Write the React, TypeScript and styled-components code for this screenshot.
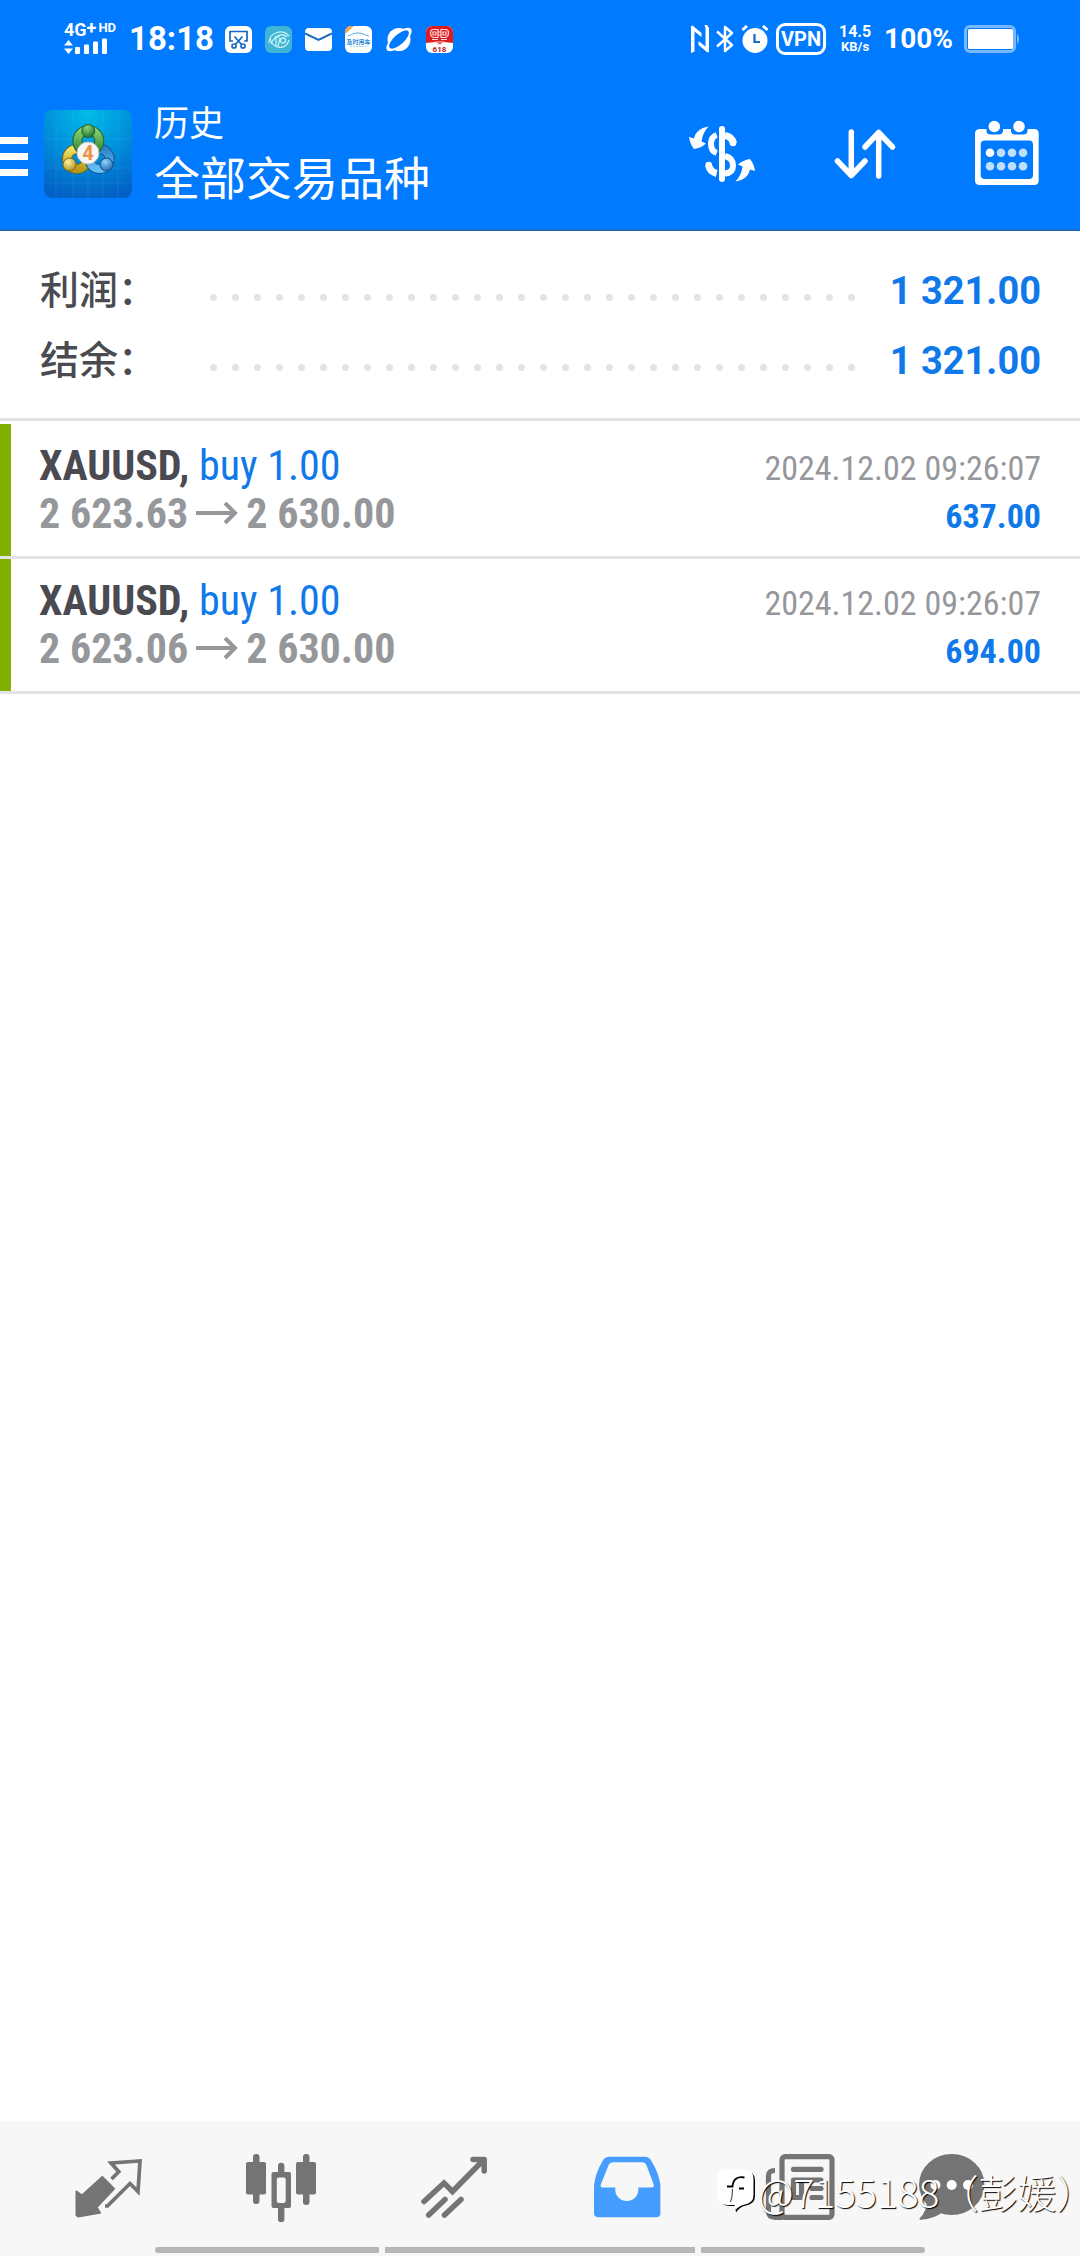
import React from 'react';
import styled, { createGlobalStyle } from 'styled-components';

const color = {
  brand: '#007aff',
  brandEdge: '#1b6cc0',
  link: '#1079ea',
  ink: '#4a4a51',
  muted: '#96979b',
  line: '#e3e3e3',
  positive: '#80b000',
  bar: '#f7f7f7',
  icon: '#747474',
  active: '#449dff',
};

const sans = "Roboto, 'Noto Sans CJK SC', sans-serif";
const cjk = "'Noto Sans CJK SC', sans-serif";
const condensed = "'Roboto Condensed', 'Liberation Sans Narrow', Roboto, sans-serif";

const GlobalStyle = createGlobalStyle`
  *, *::before, *::after { box-sizing: border-box; }
  body { margin: 0; background: #fff; font-family: ${sans}; }
  button { border: 0; padding: 0; background: none; color: inherit; font: inherit; cursor: pointer; }
  svg { display: block; }
  h1, p, dl, dd, dt, ul { margin: 0; padding: 0; font-weight: inherit; }
`;

const Screen = styled.div`
  display: flex;
  flex-direction: column;
  min-height: 100vh;
  background: #fff;
  overflow: hidden;
`;

const StatusBar = styled.div`
  display: flex;
  align-items: center;
  justify-content: space-between;
  height: 78px;
  padding: 0 60px 0 64px;
  background: ${color.brand};
  color: #fff;
  font-weight: 700;
`;

const StatusGroup = styled.div<{ $gap: number }>`
  display: flex;
  align-items: center;
  gap: ${(p) => p.$gap}px;
`;

const Signal = styled.div`
  display: flex;
  flex-direction: column;
  gap: 1px;
  width: 52px;
`;

const SignalText = styled.div`
  display: flex;
  align-items: flex-start;
  font-size: 18px;
  line-height: 14px;
  white-space: nowrap;
`;

const SignalPlus = styled.span`
  margin-right: 2px;
  font-size: 18px;
  line-height: 9px;
`;

const SignalHd = styled.span`
  font-size: 13px;
  line-height: 10px;
`;

const Clock = styled.time`
  width: 83px;
  font-size: 33px;
  line-height: 40px;
  white-space: nowrap;
`;

const VpnBadge = styled.span`
  width: 50px;
  height: 32px;
  border: 3px solid #fff;
  border-radius: 9px;
  font-size: 20px;
  line-height: 27px;
  text-align: center;
`;

const NetSpeed = styled.div`
  width: 36px;
  font-size: 16px;
  line-height: 15px;
  text-align: center;
`;

const NetUnit = styled.div`
  font-size: 13px;
`;

const Battery = styled.span`
  font-size: 28px;
  line-height: 32px;
`;

const AppBar = styled.header`
  display: flex;
  align-items: center;
  height: 153px;
  padding-right: 38px;
  border-bottom: 2px solid ${color.brandEdge};
  background: ${color.brand};
  color: #fff;
`;

const MenuButton = styled.button`
  display: flex;
  flex-direction: column;
  gap: 9px;
  width: 28px;
  margin-right: 16px;
  padding-top: 5px;
`;

const MenuLine = styled.span`
  width: 28px;
  height: 7px;
  background: #fff;
`;

const Titles = styled.div`
  flex: 1;
  padding-bottom: 1px;
  margin-left: 22px;
  font-family: ${cjk};
`;

const Caption = styled.p`
  font-size: 35px;
  line-height: 44px;
`;

const Title = styled.h1`
  font-size: 46px;
  line-height: 64px;
`;

const Actions = styled.div`
  display: flex;
  gap: 72px;
`;

const IconButton = styled.button`
  width: 70px;
  height: 70px;
`;

const Summary = styled.dl`
  padding: 21px 39px 26px 40px;
  border-bottom: 3px solid ${color.line};
`;

const SummaryRow = styled.div`
  display: flex;
  align-items: baseline;
  height: 70px;
  line-height: 70px;
`;

const SummaryLabel = styled.dt`
  width: 170px;
  color: ${color.ink};
  font-family: ${cjk};
  font-size: 39px;
  font-weight: 500;
`;

const Leader = styled.span`
  flex: 1;
  align-self: center;
  height: 7px;
  margin: 20px 24px 0 0;
  background: radial-gradient(circle at 3.5px 3.5px, ${color.line} 3px, transparent 4px) 0 0 / 22px 7px repeat-x;
`;

const SummaryValue = styled.dd`
  color: ${color.link};
  font-size: 38px;
  font-weight: 700;
`;

const DealList = styled.ul`
  padding-top: 3px;
  list-style: none;
  font-family: ${condensed};
`;

const Deal = styled.li`
  display: flex;
  justify-content: space-between;
  height: 135px;
  padding: 18px 39px 0 0;
  border-bottom: 3px solid ${color.line};
  line-height: 48px;
`;

const DealMark = styled.span`
  width: 11px;
  height: 132px;
  margin: -18px 28px 0 0;
  background: ${color.positive};
`;

const DealMain = styled.div`
  flex: 1;
  font-size: 42px;
`;

const Symbol = styled.p`
  color: ${color.ink};
  font-weight: 700;
`;

const Side = styled.span`
  color: ${color.link};
  font-weight: 400;
`;

const Prices = styled.p`
  display: flex;
  align-items: center;
  gap: 7px;
  color: ${color.muted};
  font-weight: 700;
`;

const DealSide = styled.div`
  padding-top: 2px;
  font-size: 34px;
  text-align: right;
`;

const Stamp = styled.p`
  color: ${color.muted};
`;

const Profit = styled.p`
  color: ${color.link};
  font-weight: 700;
`;

const Content = styled.main`
  flex: 1;
`;

const BottomBar = styled.footer`
  position: relative;
  padding: 32px 0 3px;
  background: ${color.bar};
`;

const Tabs = styled.nav`
  display: grid;
  grid-template-columns: repeat(5, 173fr) 131fr;
  justify-items: center;
  padding: 0 62px 0 21px;
  color: ${color.icon};
`;

const TabButton = styled.button<{ $active?: boolean }>`
  width: 70px;
  height: 70px;
  color: ${(p) => (p.$active ? color.active : color.icon)};
`;

const Handles = styled.div`
  display: grid;
  grid-template-columns: 224fr 309fr 224fr;
  gap: 6px;
  padding: 24px 155px 0;
`;

const Handle = styled.span`
  height: 6px;
  background: #b6b6b6;
  &:first-child { border-radius: 3px 0 0 3px; }
  &:last-child { border-radius: 0 3px 3px 0; }
`;

const Watermark = styled.div`
  position: absolute;
  right: 4px;
  top: 46px;
  display: flex;
  align-items: center;
  gap: 3px;
  color: #fff;
  font-family: ${cjk};
  font-size: 39px;
  font-weight: 300;
  line-height: 48px;
  white-space: nowrap;
  text-shadow: 1px 1px 1px #000;
  pointer-events: none;
`;

const HalfWidth = styled.span`
  font-feature-settings: 'halt';
`;

const SignalBars = () => (
  <svg width="44" height="17" viewBox="0 0 44 17" fill="#fff" aria-hidden="true">
    <path d="M0 7.500 4.500 2 9 7.500zM0 10.500h9L4.500 16z" />
    <rect x="11" y="9" width="5" height="7" rx="1" />
    <rect x="20" y="6.500" width="5" height="9.500" rx="1" />
    <rect x="29" y="3.500" width="5" height="12.500" rx="1" />
    <rect x="38" y="0.500" width="5" height="15.500" rx="1" />
  </svg>
);

const ScissorsIcon = () => (
  <svg width="27" height="27" viewBox="0 0 27 27" aria-hidden="true">
    <rect width="27" height="27" rx="6" fill="#fff" />
    <g fill="none" stroke="#1767c4" strokeWidth="1.7">
      <path d="M8 15H5V5.500h17V15h-3" />
      <path d="M9.500 10.500 17 19M17.500 10.500 10 19" />
      <circle cx="9" cy="20" r="2" />
      <circle cx="18" cy="20" r="2" />
    </g>
  </svg>
);

const EyeIcon = () => (
  <svg width="27" height="27" viewBox="0 0 27 27" aria-hidden="true">
    <rect width="27" height="27" rx="6" fill="#3fb4d6" />
    <g fill="none" stroke="#c6f3f5" strokeWidth="1.300">
      <path d="M4 17C4 7 17 2 24 10M5 12c2 11 16 13 19 2M6 18C10 8 18 7 22 11" />
      <path d="M11 10v10M9 13l6-3M15 12l-2 8" />
      <circle cx="18" cy="14.500" r="2.500" />
    </g>
  </svg>
);

const MailIcon = () => (
  <svg width="27" height="27" viewBox="0 0 27 27" aria-hidden="true">
    <rect y="2" width="27" height="23" rx="4" fill="#fff" />
    <path d="M0 7.500 13.500 14 27 7.500" fill="none" stroke="#1767c4" strokeWidth="2" />
  </svg>
);

const CarIcon = () => (
  <svg width="27" height="27" viewBox="0 0 27 27" aria-hidden="true">
    <rect width="27" height="27" rx="6" fill="#fff" />
    <path d="M0 8V6a6 6 0 0 1 6-6h3z" fill="#f5a04a" />
    <path d="M3 10c4-1 5-3 10-3s6 2 11 3" fill="none" stroke="#5aa9e0" />
    <text x="13.500" y="18" textAnchor="middle" fontSize="6" fontWeight="700" fill="#2b8ad6" fontFamily={cjk}>
      及时用车
    </text>
    <path d="M5 20.500h17" stroke="#a8d4f2" strokeDasharray="2 1" />
  </svg>
);

const PlanetIcon = () => (
  <svg width="28" height="27" viewBox="0 0 28 27" aria-hidden="true">
    <circle cx="14" cy="13.500" r="11.500" fill="#fff" />
    <ellipse cx="14" cy="13.500" rx="16" ry="6.500" transform="rotate(-42 14 13.500)" fill="#fff" />
    <ellipse cx="14" cy="13.500" rx="12.500" ry="5" transform="rotate(-42 14 13.500)" fill={color.brand} />
  </svg>
);

const SaleIcon = () => (
  <svg width="27" height="27" viewBox="0 0 27 27" aria-hidden="true">
    <rect width="27" height="27" rx="6" fill="#fff" />
    <path d="M0 17V6a6 6 0 0 1 6-6h15a6 6 0 0 1 6 6v11l-9-1-4 2-5-2z" fill="#dc1b24" />
    <g fill="none" stroke="#ffd9d6" strokeWidth="1.200">
      <path d="M12 3.500H7.500Q4.500 3.500 4.500 7t3 4.500H12zM15 3.500h4.500q3 0 3 3.500t-3 4.500H15z" />
      <path d="M7 6h3v3H7zM17 6h3v3h-3zM12 6h3M12 9h3M6 13.500h6M15 13.500h6M9 16h9M11 18.500h5" />
    </g>
    <text x="13.500" y="26" textAnchor="middle" fontSize="8" fontWeight="700" fill="#c01820" fontFamily={sans}>
      618
    </text>
  </svg>
);

const NfcIcon = () => (
  <svg width="18" height="28" viewBox="0 0 18 28" fill="#fff" aria-hidden="true">
    <path d="M0 1 1.500 .5 10.500 8v4L3.500 6.500v20L0 28zM18 27l-1.500.5L7.500 20v-4l7 5.500V3L13.500 0H16l2 3z" />
  </svg>
);

const BluetoothIcon = () => (
  <svg width="18" height="28" viewBox="0 0 18 28" fill="none" stroke="#fff" strokeWidth="2.500" aria-hidden="true">
    <path d="M1 6.500 16 20l-7 6V2l7 6L1 21.500" strokeLinejoin="round" />
  </svg>
);

const AlarmIcon = () => (
  <svg width="28" height="28" viewBox="0 0 28 28" aria-hidden="true">
    <circle cx="14" cy="15.500" r="12.500" fill="#fff" />
    <path d="M1.500 5 6 1M22 1l4.500 4" stroke="#fff" strokeWidth="3" />
    <path d="M13.500 9v8H19" fill="none" stroke="#1767c4" strokeWidth="2.200" />
  </svg>
);

const BatteryIcon = () => (
  <svg width="56" height="28" viewBox="0 0 56 28" aria-hidden="true">
    <rect x="1.500" y="1.500" width="49" height="25" rx="4.500" fill="none" stroke="#78b8ff" strokeWidth="3" />
    <path d="M53 9q2 1 2 5t-2 5z" fill="#78b8ff" />
    <rect x="4" y="4" width="45" height="20" rx="1.500" fill="#fff" />
  </svg>
);

const AppLogo = () => (
  <svg width="88" height="88" viewBox="0 0 88 88" role="img" aria-label="MetaTrader 4">
    <defs>
      <radialGradient id="sky" cx="0.5" cy="0.02" r="1">
        <stop offset="0" stopColor="#00bce8" />
        <stop offset="0.5" stopColor="#0090dc" />
        <stop offset="1" stopColor="#0360c4" />
      </radialGradient>
      <linearGradient id="green" x1="0" y1="0" x2="0" y2="1">
        <stop offset="0" stopColor="#8ad06c" />
        <stop offset="1" stopColor="#2c8434" />
      </linearGradient>
      <linearGradient id="gold" x1="0" y1="0" x2="0" y2="1">
        <stop offset="0" stopColor="#f3e263" />
        <stop offset="1" stopColor="#b99a18" />
      </linearGradient>
      <linearGradient id="azure" x1="0" y1="0" x2="0" y2="1">
        <stop offset="0" stopColor="#2d84cc" />
        <stop offset="1" stopColor="#62bff2" />
      </linearGradient>
      <radialGradient id="greenBall" cx="0.4" cy="0.25" r="0.8">
        <stop offset="0" stopColor="#8fd47c" />
        <stop offset="1" stopColor="#17702b" />
      </radialGradient>
      <radialGradient id="goldBall" cx="0.4" cy="0.3" r="0.8">
        <stop offset="0" stopColor="#fff3a0" />
        <stop offset="1" stopColor="#a88812" />
      </radialGradient>
      <radialGradient id="azureBall" cx="0.4" cy="0.3" r="0.8">
        <stop offset="0" stopColor="#8fd4fa" />
        <stop offset="1" stopColor="#155ea6" />
      </radialGradient>
    </defs>
    <rect width="88" height="88" rx="8" fill="url(#sky)" />
    <path d="M0 29h88M0 58h88M0 73h88M12 0v88M29 0v88M44 0v88M59 0v88M74 0v88" stroke="#5cc0f2" strokeOpacity="0.16" />
    <g fill="none">
      <circle cx="33" cy="49" r="10" stroke="#6f6a1c" strokeWidth="10" />
      <circle cx="33" cy="49" r="10" stroke="url(#gold)" strokeWidth="8" />
      <circle cx="55.500" cy="49" r="10" stroke="#125292" strokeWidth="10" />
      <circle cx="55.500" cy="49" r="10" stroke="url(#azure)" strokeWidth="8" />
      <circle cx="44.300" cy="31" r="11" stroke="#1d6230" strokeWidth="10" />
      <circle cx="44.300" cy="31" r="11" stroke="url(#green)" strokeWidth="8" />
    </g>
    <circle cx="44.300" cy="21" r="6.500" fill="url(#greenBall)" stroke="#1d6230" />
    <circle cx="25.500" cy="54.500" r="6.500" fill="url(#goldBall)" stroke="#7d6d18" />
    <circle cx="62.500" cy="54.500" r="6.500" fill="url(#azureBall)" stroke="#125292" />
    <circle cx="44" cy="43" r="11" fill="#f8f6f4" stroke="#c9bfb4" />
    <text x="44" y="50" textAnchor="middle" fontSize="20" fontWeight="700" fill="#f0914a" fontFamily={sans}>
      4
    </text>
  </svg>
);

const DollarIcon = () => (
  <svg width="70" height="70" viewBox="0 0 70 70" fill="#fff" aria-hidden="true">
    <rect x="31" y="7" width="6" height="56" rx="3" />
    <g fill="none" stroke="#fff" strokeWidth="6">
      <path d="M28.700 16Q23 18 23 25t5.700 9" />
      <path d="M20.500 46Q22 53 28.700 54.500M37 16.500q7 1 8.500 8" strokeWidth="7" />
      <path d="M37 37q8 2 8 9.500T37 54.500" />
    </g>
    <circle cx="20.700" cy="46" r="3.300" />
    <circle cx="45" cy="24" r="3.300" />
    <path id="turn" d="M20.500 7.500C12 9 7.500 13 6 19.500L1 18q1 7 5 12 7-1 12-5.500l-4.500-2Q14.500 14 20.500 7.500z" />
    <use href="#turn" transform="rotate(180 34 35)" />
  </svg>
);

const SortIcon = () => (
  <svg width="70" height="70" viewBox="0 0 70 70" fill="none" stroke="#fff" strokeWidth="5.500" strokeLinecap="round" strokeLinejoin="round" aria-hidden="true">
    <path d="M21.300 13v43.500M7.500 42l13.800 14.500L35 42M48.700 57V13.500M35 28l13.700-14.500L62.500 28" />
  </svg>
);

const CalendarIcon = () => (
  <svg width="70" height="70" viewBox="0 0 70 70" fill="#fff" aria-hidden="true">
    <path
      fillRule="evenodd"
      d="M8 10h6.500v1.500q0 4 4 4H27q4 0 4-4V10h8v1.500q0 4 4 4h8.500q4 0 4-4V10H62q4.700 0 4.700 4.500v47q0 4.500-4.700 4.500H8q-5 0-5-4.500v-47Q3 10 8 10zM13 21.500q-4.300 0-4.300 4V56q0 4 4.300 4h44q4 0 4-4V25.500q0-4-4-4z"
    />
    <circle cx="22.300" cy="7.500" r="5.800" />
    <circle cx="47" cy="7.500" r="5.800" />
    <circle cx="18" cy="33.700" r="4.300" />
    <g fill="#bfdfff">
      <circle cx="29" cy="33.700" r="4.300" />
      <circle cx="40" cy="33.700" r="4.300" />
      <circle cx="51" cy="33.700" r="4.300" />
      <circle cx="18" cy="47.300" r="4.300" />
      <circle cx="29" cy="47.300" r="4.300" />
      <circle cx="40" cy="47.300" r="4.300" />
      <circle cx="51" cy="47.300" r="4.300" />
    </g>
  </svg>
);

const PriceArrow = () => (
  <svg width="44" height="24" viewBox="0 0 44 24" fill="none" stroke="currentColor" strokeWidth="4" role="img" aria-label="to">
    <path d="M1 11h40M30 1l10 10-10 10" />
  </svg>
);

const QuotesIcon = () => (
  <svg width="70" height="70" viewBox="0 0 70 70" aria-hidden="true">
    <path
      d="M3.500 38.500 9 42.500 29.300 24 41 35.700 23.500 54.300l3.500 5.500L5 63.500 3.500 62z"
      fill="currentColor"
      stroke="currentColor"
      strokeWidth="2"
      strokeLinejoin="round"
    />
    <path d="m38.500 26 7.300-7.300L38 10l29-2-2 30.500-8-8L34.500 53H32" fill="none" stroke="currentColor" strokeWidth="3.700" />
  </svg>
);

const CandlesIcon = () => (
  <svg width="70" height="70" viewBox="0 0 70 70" fill="currentColor" aria-hidden="true">
    <rect x="7" y="1" width="6.500" height="50" rx="3" />
    <rect y="9" width="20" height="32.500" rx="2" />
    <rect x="57" y="1" width="6.500" height="51" rx="3" />
    <rect x="50" y="9" width="20" height="32.500" rx="2" />
    <path d="M32 19v-6a3.200 3.200 0 0 1 6.400 0v6H43q2 0 2 2v32q0 2-2 2h-4.600v11a3.200 3.200 0 0 1-6.400 0V55h-4.500q-2 0-2-2V21q0-2 2-2zm1 5.500q-2.200 0-2.200 2V48q0 2 2.200 2h4.500q2.200 0 2.200-2V26.500q0-2-2.200-2z" fillRule="evenodd" />
  </svg>
);

const TradeIcon = () => (
  <svg width="70" height="70" viewBox="0 0 70 70" fill="none" stroke="currentColor" strokeWidth="5.500" aria-hidden="true">
    <path d="M5 48.500 25 30l8.500 8.500L64 7.500M9.700 62 26 46.500M25.500 62 42 46.500" strokeLinecap="round" />
    <path d="M54 6.500h11.200V18" strokeLinecap="round" strokeLinejoin="round" />
  </svg>
);

const InboxIcon = () => (
  <svg width="70" height="70" viewBox="0 0 70 70" fill="currentColor" aria-hidden="true">
    <path
      fillRule="evenodd"
      d="M17 3.700h36q4 0 6 3.500 8 13 9.400 25V60q0 4.300-4.500 4.300H6.500Q2 64.300 2 60V32.200Q3.300 20 11 7.200q2-3.500 6-3.500zM21 9.300q-3 0-4.500 3L9 31q-1.300 3.500 2 3.500h12.300V37a11.500 11 0 0 0 23 0v-2.500H59.500q3.300 0 2-3.500L54.500 12.300q-1.300-3-4.500-3z"
    />
  </svg>
);

const NewsIcon = () => (
  <svg width="70" height="70" viewBox="0 0 70 70" fill="none" stroke="currentColor" strokeWidth="5.200" strokeLinecap="round" aria-hidden="true">
    <rect x="17" y="3.700" width="50" height="60.600" rx="3" />
    <path d="M10 17.500q-6.500 0-6.500 5V58q0 6.300 6.500 6.300h8" strokeLinecap="butt" />
    <path d="M28.500 16.300h27.500M28.500 27h27.500M47 35.500h9M47 44.500h9M28.500 28v16.500h8V28" />
  </svg>
);

const ChatIcon = () => (
  <svg width="70" height="70" viewBox="0 0 70 70" fill="currentColor" aria-hidden="true">
    <ellipse cx="34.700" cy="31.500" rx="32.700" ry="30.500" />
    <path d="M10 48q0 10-7.500 17.500Q2 67 4 66.700 17 66 26 59z" />
    <g fill="#fff">
      <circle cx="18.500" cy="32" r="5" />
      <circle cx="34.700" cy="32" r="5" />
      <circle cx="51" cy="32" r="5" />
    </g>
  </svg>
);

const WatermarkLogo = () => (
  <svg width="38" height="44" viewBox="0 0 38 44" aria-hidden="true">
    <path d="M14 2h14q10 0 10 10v15q0 8-9 9.500-6 1-10 7l-1-6.500h-4q-7 0-9-3z" fill="#000" />
    <path d="M11 0h15q10.500 0 10.500 10.500v15.500q0 8-8.500 9.500-6 1-9.500 5.500L17.500 36H11Q0 36 0 25.500v-15Q0 0 11 0z" fill="#fff" />
    <path d="M27.500 8.500q-11-2-12 9h-5.500M22 19.500h5" fill="none" stroke="#000" strokeWidth="1.800" />
    <path d="M15.500 20q0 8-2 13" fill="none" stroke="#000" strokeWidth="0.800" />
  </svg>
);

const summary = [
  { label: '利润：', value: '1 321.00' },
  { label: '结余：', value: '1 321.00' },
];

const deals = [
  { symbol: 'XAUUSD,', side: 'buy 1.00', open: '2 623.63', close: '2 630.00', time: '2024.12.02 09:26:07', profit: '637.00' },
  { symbol: 'XAUUSD,', side: 'buy 1.00', open: '2 623.06', close: '2 630.00', time: '2024.12.02 09:26:07', profit: '694.00' },
];

const tabs = [
  { label: '行情', icon: <QuotesIcon /> },
  { label: '图表', icon: <CandlesIcon /> },
  { label: '交易', icon: <TradeIcon /> },
  { label: '历史', icon: <InboxIcon />, active: true },
  { label: '新闻', icon: <NewsIcon /> },
  { label: '消息', icon: <ChatIcon /> },
];

export default function App() {
  return (
    <Screen>
      <GlobalStyle />
      <StatusBar>
        <StatusGroup $gap={13}>
          <Signal>
            <SignalText>
              4G
              <SignalPlus>+</SignalPlus>
              <SignalHd>HD</SignalHd>
            </SignalText>
            <SignalBars />
          </Signal>
          <Clock>18:18</Clock>
          <ScissorsIcon />
          <EyeIcon />
          <MailIcon />
          <CarIcon />
          <PlanetIcon />
          <SaleIcon />
        </StatusGroup>
        <StatusGroup $gap={11}>
          <StatusGroup $gap={7}>
            <NfcIcon />
            <BluetoothIcon />
            <AlarmIcon />
            <VpnBadge>VPN</VpnBadge>
          </StatusGroup>
          <NetSpeed>
            14.5
            <NetUnit>KB/s</NetUnit>
          </NetSpeed>
          <Battery>100%</Battery>
          <BatteryIcon />
        </StatusGroup>
      </StatusBar>
      <AppBar>
        <MenuButton aria-label="菜单">
          <MenuLine />
          <MenuLine />
          <MenuLine />
        </MenuButton>
        <AppLogo />
        <Titles>
          <Caption>历史</Caption>
          <Title>全部交易品种</Title>
        </Titles>
        <Actions>
          <IconButton aria-label="货币">
            <DollarIcon />
          </IconButton>
          <IconButton aria-label="排序">
            <SortIcon />
          </IconButton>
          <IconButton aria-label="日期">
            <CalendarIcon />
          </IconButton>
        </Actions>
      </AppBar>
      <Content>
        <Summary>
          {summary.map((row) => (
            <SummaryRow key={row.label}>
              <SummaryLabel>{row.label}</SummaryLabel>
              <Leader />
              <SummaryValue>{row.value}</SummaryValue>
            </SummaryRow>
          ))}
        </Summary>
        <DealList>
          {deals.map((deal) => (
            <Deal key={deal.profit}>
              <DealMark />
              <DealMain>
                <Symbol>
                  {deal.symbol} <Side>{deal.side}</Side>
                </Symbol>
                <Prices>
                  <span>{deal.open}</span>
                  <PriceArrow />
                  <span>{deal.close}</span>
                </Prices>
              </DealMain>
              <DealSide>
                <Stamp>{deal.time}</Stamp>
                <Profit>{deal.profit}</Profit>
              </DealSide>
            </Deal>
          ))}
        </DealList>
      </Content>
      <BottomBar>
        <Tabs>
          {tabs.map((tab) => (
            <TabButton key={tab.label} aria-label={tab.label} $active={tab.active}>
              {tab.icon}
            </TabButton>
          ))}
        </Tabs>
        <Handles>
          <Handle />
          <Handle />
          <Handle />
        </Handles>
        <Watermark>
          <WatermarkLogo />
          <span>
            @7155188（彭媛<HalfWidth>）</HalfWidth>
          </span>
        </Watermark>
      </BottomBar>
    </Screen>
  );
}
